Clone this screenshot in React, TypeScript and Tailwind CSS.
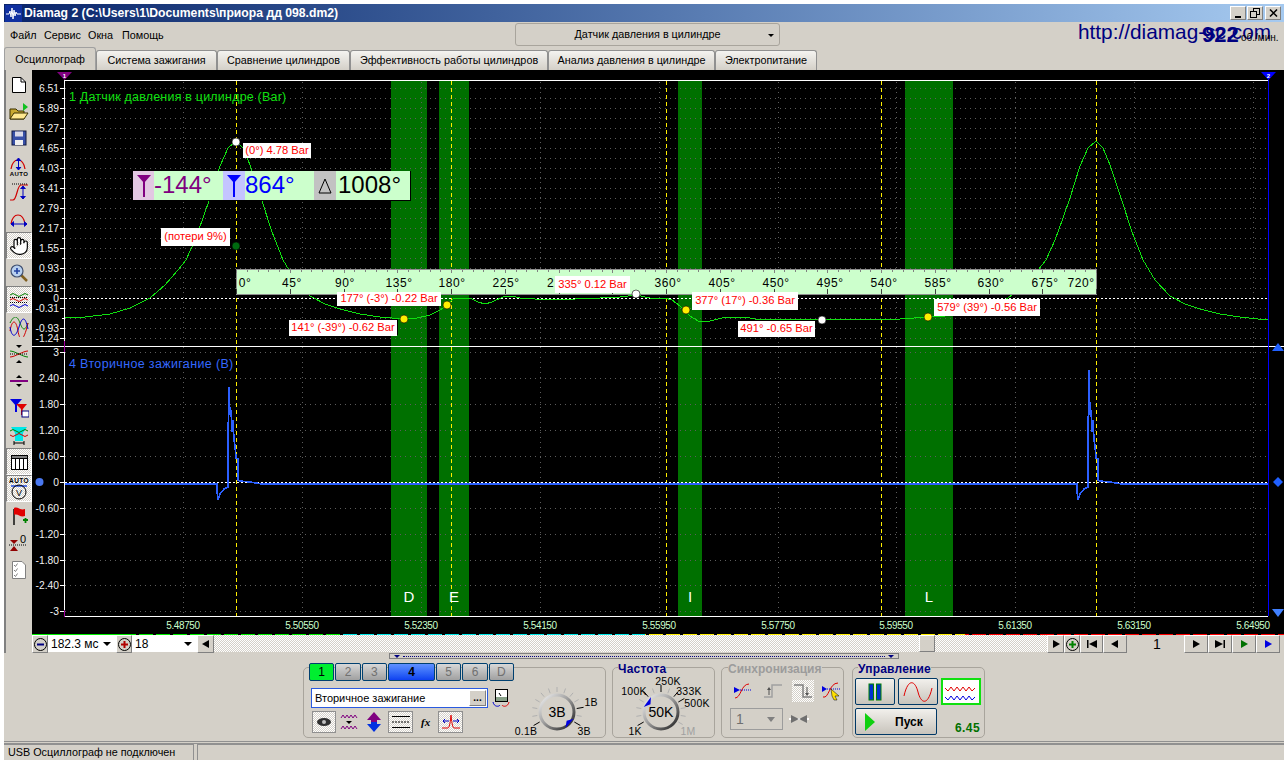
import { Hand } from "lucide-react";

const sans = "font-['Liberation_Sans',Arial,sans-serif]";
const raised = "border border-t-white border-l-white border-r-[#808080] border-b-[#808080]";
const dither = "bg-[repeating-conic-gradient(#ffffff_0%_25%,#d4d0c8_0%_50%)] bg-size-[2px_2px]";

const tabs = [
  { label: "Система зажигания", w: "w-[121px]" },
  { label: "Сравнение цилиндров", w: "w-[133px]" },
  { label: "Эффективность работы цилиндров", w: "w-[198px]" },
  { label: "Анализ давления в цилиндре", w: "w-[167px]" },
  { label: "Электропитание", w: "w-[102px]" },
];

const topTicks: [string, number][] = [
  ["6.51", 88], ["5.89", 108], ["5.27", 128], ["4.65", 148], ["4.03", 168], ["3.41", 188], ["2.79", 208], ["2.17", 228],
  ["1.55", 248], ["0.93", 268], ["0.31", 288], ["0", 298], ["-0.31", 308], ["-0.93", 328], ["-1.24", 338],
];
const botTicks: [string, number][] = [
  ["3", 352], ["2.40", 378], ["1.80", 404], ["1.20", 430], ["0.60", 456], ["0", 482], ["-0.60", 508], ["-1.20", 534],
  ["-1.80", 560], ["-2.40", 585], ["-3", 611],
];
const xLabels = ["5.48750", "5.50550", "5.52350", "5.54150", "5.55950", "5.57750", "5.59550", "5.61350", "5.63150", "5.64950"];
const xGrid = [183, 302, 421, 540, 659, 778, 896, 1015, 1134, 1253];
const bands: [number, number, string][] = [[391, 36, "D"], [439, 30, "E"], [678, 24, "I"], [905, 48, "L"]];
const cursors = [236, 451, 666, 881, 1096];

// one compression hump, shifted for the second peak
const hump = [
  [64, 318], [85, 317], [110, 314], [130, 308], [150, 298], [165, 285], [178, 270], [186, 260], [195, 240], [203, 218],
  [210, 198], [220, 166], [228, 148], [236, 141], [243, 148], [250, 165], [262, 201], [272, 232], [283, 260], [295, 280],
  [310, 296], [325, 304], [340, 309], [360, 314], [380, 317],
];
const mid = [
  [403, 319], [417, 318], [430, 315], [440, 310], [447, 305], [453, 299], [462, 298], [470, 298], [478, 302], [485, 304],
  [492, 302], [503, 297], [512, 296], [520, 298], [535, 299], [555, 300], [575, 299], [600, 298], [620, 297], [636, 295],
  [650, 298], [665, 298], [672, 300], [680, 306], [690, 316], [698, 321], [710, 321], [722, 318], [735, 317], [745, 317],
  [760, 320], [775, 319], [795, 319], [820, 320], [835, 319], [850, 320], [870, 319], [900, 319], [928, 317], [945, 316],
];
const second = hump.slice(3).map(([x, y]) => [x + 860, y]);
const tail = [[1260, 319], [1268, 320]];
const trace1 = [...hump, ...mid, [970, 310], [990, 308], [1000, 304], ...second.slice(2), [1258, 319], ...tail]
  .map((p) => p.join(","))
  .join(" ");

const spike = (dx: number, top: number) =>
  [
    [217, 484], [217, 491], [218, 500], [220, 494], [224, 489], [228, 487], [228, 438], [229, top], [230, 415], [231, 410], [232, 432],
    [233, 420], [234, 440], [235, 446], [236, 458], [238, 459], [238, 480], [240, 481], [250, 482], [262, 484],
  ]
    .map(([x, y]) => `${x + dx},${y}`)
    .join(" ");
const trace2 = `64,484 ${spike(0, 387)} ${spike(860, 370)} 1268,484`;

const tooltips = [
  { t: "(0°) 4.78 Bar", c: "left-[211px] top-[73px] w-[68px] h-[15px]" },
  { t: "(потери 9%)", c: "left-[129px] top-[158px] w-[69px] h-[18px]" },
  { t: "335° 0.12 Bar", c: "left-[523px] top-[206px] w-[75px] h-[17px]" },
  { t: "177° (-3°) -0.22 Bar", c: "left-[305px] top-[222px] w-[104px] h-[14px]" },
  { t: "377° (17°) -0.36 Bar", c: "left-[660px] top-[222px] w-[106px] h-[18px]" },
  { t: "579° (39°) -0.56 Bar", c: "left-[902px] top-[229px] w-[106px] h-[17px]" },
  { t: "141° (-39°) -0.62 Bar", c: "left-[257px] top-[250px] w-[108px] h-[16px] shadow-[1px_-1px_0_#000]" },
  { t: "491° -0.65 Bar", c: "left-[706px] top-[251px] w-[77px] h-[16px]" },
];

const dots: [number, number, string][] = [
  [236, 142, "#ffffff"], [236, 246, "#006a10"], [404, 319, "#ffee00"], [447, 305, "#ffee00"], [636, 294, "#ffffff"],
  [686, 310, "#ffee00"], [822, 320, "#ffffff"], [928, 317, "#ffee00"],
];

const rulerLabels: [string, number][] = [
  ["0°", 245], ["45°", 292], ["90°", 345], ["135°", 399], ["180°", 452], ["225°", 506], ["360°", 668], ["405°", 722],
  ["450°", 776], ["495°", 830], ["540°", 884], ["585°", 938], ["630°", 991], ["675°", 1045], ["720°", 1081],
];

function Chart() {
  return (
    <div className="relative w-[1252px] h-[564px] bg-black overflow-hidden">
      <svg className="absolute inset-0" width="1252" height="564" viewBox="32 70 1252 564">
        {bands.map(([x, w, l]) => (
          <rect key={l} x={x} y={81} width={w} height={535} fill="#007000" />
        ))}
        <g stroke="#5c5c5c" strokeDasharray="1 4" shapeRendering="crispEdges">
          {Array.from({ length: 26 }, (_, i) => 88 + i * 10).map((y) =>
            y === 298 ? null : <line key={y} x1={65} x2={1267} y1={y + 0.5} y2={y + 0.5} />,
          )}
          {botTicks.map(([l, y]) => (l === "0" ? null : <line key={l} x1={65} x2={1267} y1={y + 0.5} y2={y + 0.5} />))}
          {xGrid.map((x) => (
            <line key={x} x1={x + 0.5} x2={x + 0.5} y1={82} y2={616} />
          ))}
        </g>
        <g stroke="#ffee00" strokeDasharray="4 3" shapeRendering="crispEdges">
          {cursors.map((x) => (
            <line key={x} x1={x + 0.5} x2={x + 0.5} y1={81} y2={616} />
          ))}
        </g>
        <g stroke="#ffffff" strokeDasharray="2 2" shapeRendering="crispEdges">
          <line x1={65} x2={1267} y1={298.5} y2={298.5} />
          <line x1={65} x2={1267} y1={482.5} y2={482.5} />
        </g>
        <polyline points={trace1} fill="none" stroke="#10e010" strokeWidth="1" shapeRendering="crispEdges" />
        <polyline points={trace2} fill="none" stroke="#2c60ff" strokeWidth="1.6" shapeRendering="crispEdges" />
        <g stroke="#ffffff" shapeRendering="crispEdges">
          <line x1={64} x2={1268} y1={80.5} y2={80.5} />
          <line x1={32} x2={1284} y1={346.5} y2={346.5} />
          <line x1={64} x2={1268} y1={616.5} y2={616.5} />
          <line x1={64.5} x2={64.5} y1={80} y2={616} />
          {topTicks.map(([l, y]) => (
            <line key={l} x1={60} x2={64} y1={y + 0.5} y2={y + 0.5} />
          ))}
          {Array.from({ length: 13 }, (_, i) => 98 + i * 20).map((y) => (
            <line key={y} x1={62} x2={64} y1={y + 0.5} y2={y + 0.5} />
          ))}
          {botTicks.map(([l, y]) => (
            <line key={l} x1={60} x2={64} y1={y + 0.5} y2={y + 0.5} />
          ))}
        </g>
        <line x1={64.5} x2={64.5} y1={341} y2={352} stroke="#a000a0" shapeRendering="crispEdges" />
        <line x1={64.5} x2={64.5} y1={610} y2={617} stroke="#a000a0" shapeRendering="crispEdges" />
        <line x1={1268.5} x2={1268.5} y1={76} y2={616} stroke="#0000ff" strokeWidth="1" shapeRendering="crispEdges" />
        <polygon points="57,72 72,72 64.5,80" fill="#800080" />
        <polygon points="1261,72 1276,72 1268.5,80" fill="#0000ff" />
        <text x={64.5} y={78} fontSize="6" fontWeight="bold" fill="#fff" textAnchor="middle" fontFamily="Liberation Sans">1</text>
        <text x={1268.5} y={78} fontSize="6" fontWeight="bold" fill="#fff" textAnchor="middle" fontFamily="Liberation Sans">2</text>
        <polygon points="1278,343 1284,351 1272,351" fill="#2060ff" />
        <polygon points="1278,477 1283,482 1278,487 1273,482" fill="#2060ff" />
        <polygon points="1272,609 1284,609 1278,617" fill="#4080ff" />
        <circle cx={39.5} cy={482} r={4} fill="#4a78f0" />
        <g fontFamily="Liberation Sans" fontSize="10.3" fill="#f0f0f0" textAnchor="end">
          {topTicks.map(([l, y]) => (
            <text key={l} x={59} y={y + 4}>{l}</text>
          ))}
          {botTicks.map(([l, y]) => (
            <text key={l} x={59} y={y + 4}>{l}</text>
          ))}
        </g>
        <g fontFamily="Liberation Sans" fontSize="10" fill="#ccffcc" textAnchor="middle" letterSpacing="-0.4">
          {xLabels.map((l, i) => (
            <text key={l} x={xGrid[i]} y={629}>{l}</text>
          ))}
        </g>
        <g fontFamily="Liberation Sans" fontSize="15" fill="#ffffff" textAnchor="middle">
          {bands.map(([x, w, l]) => (
            <text key={l} x={x + w / 2} y={602}>{l}</text>
          ))}
        </g>
        <text x={69} y={101} fontFamily="Liberation Sans" fontSize="12.5" fill="#10e010" letterSpacing="0.2">1 Датчик давления в цилиндре (Bar)</text>
        <text x={69} y={368} fontFamily="Liberation Sans" fontSize="12.5" fill="#3468ff" letterSpacing="0.35">4 Вторичное зажигание (В)</text>
        {/* ruler */}
        <rect x={236} y={269} width={860} height={25} fill="#ccffcc" stroke="#909090" shapeRendering="crispEdges" />
        <g stroke="#808080" shapeRendering="crispEdges">
          {Array.from({ length: 81 }, (_, i) => i).map((i) => {
            const x = Math.round(236 + i * 10.75) + 0.5;
            return <line key={i} x1={x} x2={x} y1={270} y2={i % 5 === 0 ? 273 : 272} />;
          })}
        </g>
        <g stroke="#404040" shapeRendering="crispEdges">
          {Array.from({ length: 17 }, (_, i) => i).map((i) => {
            const x = Math.round(236 + i * 53.75) + 0.5;
            return <line key={i} x1={x} x2={x} y1={289} y2={294} />;
          })}
        </g>
        <g fontFamily="Liberation Sans" fontSize="12" fill="#000" textAnchor="middle" letterSpacing="0.6">
          {rulerLabels.map(([l, x]) => (
            <text key={l} x={x} y={287}>{l}</text>
          ))}
        </g>
        <text x={547} y={287} fontFamily="Liberation Sans" fontSize="12" fill="#000">2</text>
      </svg>
      {tooltips.map((t) => (
        <div key={t.t} className={`absolute bg-white text-[#ff0000] text-[11.2px] leading-none flex items-center justify-center whitespace-nowrap ${t.c}`}>
          {t.t}
        </div>
      ))}
      <svg className="absolute inset-0 pointer-events-none" width="1252" height="564" viewBox="32 70 1252 564">
        {dots.map(([x, y, c], i) => (
          <circle key={i} cx={x} cy={y} r={4} fill={c} stroke="#000" strokeWidth="0.6" />
        ))}
      </svg>
      {/* measurement box */}
      <div className="absolute left-[101px] top-[101px] flex h-[30px] w-[278px] bg-[#ccffcc] text-[24px] leading-[28px] border-r border-b border-black">
        <div className="w-[21px] bg-[#e2c8e2] flex items-center justify-center">
          <CursorMark color="#800080" />
        </div>
        <div className="w-[69px] text-[#800080]">-144°</div>
        <div className="w-[22px] bg-[#c4c4ff] flex items-center justify-center">
          <CursorMark color="#0000ff" />
        </div>
        <div className="w-[69px] text-[#0000ff]">864°</div>
        <div className="w-[22px] bg-[#c2c2c2] flex items-center justify-center">
          <svg width="16" height="18" viewBox="0 0 16 18"><path d="M8 2 L14 16 H2 Z" fill="none" stroke="#000" /></svg>
        </div>
        <div className="pl-[2px] text-black">1008°</div>
      </div>
    </div>
  );
}

function CursorMark({ color }: { color: string }) {
  return (
    <svg width="16" height="24" viewBox="0 0 16 24">
      <polygon points="1,1 15,1 8,9" fill={color} />
      <rect x="7" y="6" width="2" height="17" fill={color} />
    </svg>
  );
}

function ToolIcon({ i }: { i: number }) {
  const arc = <path d="M2 15 C4 3 14 3 16 15" fill="none" stroke="#d00000" strokeWidth="1.2" />;
  switch (i) {
    case 0:
      return <svg width="20" height="20" viewBox="0 0 20 20"><path d="M3.5 3.5 H12 L16.5 8 V18.5 H3.5 Z" fill="#fff" stroke="#000" /><path d="M12 3.5 V8 H16.5" fill="none" stroke="#000" /></svg>;
    case 1:
      return <svg width="20" height="20" viewBox="0 0 20 20"><path d="M1 18 V8 H7 L9 10 H15 V18 Z" fill="#c8a830" stroke="#3a3000" /><path d="M1 18 L5 12 H19 L15 18 Z" fill="#ffe890" stroke="#3a3000" /><polygon points="14,2 19,6 14,10" fill="#10c020" /></svg>;
    case 2:
      return <svg width="20" height="20" viewBox="0 0 20 20"><rect x="3" y="3" width="14" height="14" fill="#3850a8" stroke="#101840" /><rect x="6" y="3.5" width="8" height="5" fill="#d8d8e8" /><rect x="6" y="12" width="8" height="5" fill="#f0f0f0" /></svg>;
    case 3:
      return <svg width="20" height="22" viewBox="0 0 20 22">{arc}<path d="M9.5 5 V15 M7 7 L9.5 4 L12 7 M7 13 L9.5 16 L12 13" fill="#0000c0" stroke="#0000c0" /><text x="10" y="21.5" fontSize="6" fontWeight="bold" textAnchor="middle" fontFamily="Liberation Sans" letterSpacing="0.4">AUTO</text></svg>;
    case 4:
      return <svg width="20" height="20" viewBox="0 0 20 20"><path d="M1 18 H4 C8 18 8 3 12 3 H19" fill="none" stroke="#d00000" strokeWidth="1.2" /><path d="M3 2 H19" stroke="#000" strokeDasharray="1 1" /><path d="M14 5 V16 M11.5 7 L14 4 L16.5 7 M11.5 14 L14 17 L16.5 14" fill="#0000c0" stroke="#0000c0" /></svg>;
    case 5:
      return <svg width="20" height="20" viewBox="0 0 20 20">{arc}<path d="M2 15 H18 M5 12.5 L2 15 L5 17.5 M15 12.5 L18 15 L15 17.5" fill="#0000c0" stroke="#0000c0" /></svg>;
    case 6:
      return <Hand size={20} fill="#ffffff" stroke="#000000" strokeWidth={1.4} />;
    case 7:
      return <svg width="20" height="20" viewBox="0 0 20 20"><line x1="12" y1="12" x2="18" y2="18" stroke="#806020" strokeWidth="2.5" /><circle cx="8" cy="8" r="6" fill="#b8d0ef" stroke="#405070" strokeWidth="1.2" /><path d="M5 8 H11 M8 5 V11" stroke="#2040a0" strokeWidth="1.6" /></svg>;
    case 8:
      return <svg width="20" height="20" viewBox="0 0 20 20" fill="none"><path d="M1 5 q3 -3 6 0 t6 0 t6 0" stroke="#008000" /><path d="M1 7.5 H19" stroke="#000" strokeDasharray="1 1" /><path d="M1 10 q3 -3 6 0 t6 0 t6 0" stroke="#d00000" /><path d="M1 12.5 H19" stroke="#000" strokeDasharray="1 1" /><path d="M1 16 q3 -3 6 0 t6 0 t6 0" stroke="#0000d0" /></svg>;
    case 9:
      return <svg width="20" height="20" viewBox="0 0 20 20" fill="none"><path d="M1 6 C5 -2 8 -2 11 6 S16 14 19 6" stroke="#008000" /><path d="M1 14 C3 2 7 2 9 14 S15 24 19 6" stroke="#d00000" /><path d="M1 10 C3 22 7 20 10 10 S16 -2 19 12" stroke="#0000d0" /></svg>;
    case 10:
      return <svg width="20" height="20" viewBox="0 0 20 20" fill="none"><polygon points="7,1 13,1 10,4" fill="#000" /><polygon points="7,19 13,19 10,16" fill="#000" /><path d="M1 7 C6 7 14 13 19 13" stroke="#008000" /><path d="M1 13 C6 13 14 7 19 7" stroke="#d00000" /><path d="M1 10 H19" stroke="#000" strokeDasharray="1 1" /></svg>;
    case 11:
      return <svg width="20" height="20" viewBox="0 0 20 20"><polygon points="7,7 13,7 10,4" fill="#000" /><polygon points="7,13 13,13 10,16" fill="#000" /><rect x="1" y="9" width="18" height="2" fill="#800080" /></svg>;
    case 12:
      return <svg width="20" height="20" viewBox="0 0 20 20"><polygon points="1,1 13,1 7,8" fill="#0000e0" /><rect x="6" y="6" width="2" height="8" fill="#0000e0" /><polygon points="7,6 18,6 13,12" fill="#e00000" /><rect x="12" y="10" width="1.5" height="7" fill="#e00000" /><rect x="13" y="13" width="7" height="6" fill="#fff" stroke="#000080" /></svg>;
    case 13:
      return <svg width="20" height="20" viewBox="0 0 20 20" fill="none"><polygon points="2,2 18,2 14,8 14,16 6,16 6,8" fill="#00e8e8" /><path d="M1 6 q3 -3 6 0 t6 0 t6 0" stroke="#008000" /><path d="M1 10 q3 3 6 0 t6 0 t6 0" stroke="#d00000" /><path d="M5 18 H15 M5 16 V20 M15 16 V20" stroke="#000" /></svg>;
    case 14:
      return <svg width="20" height="20" viewBox="0 0 20 20"><rect x="2.5" y="3.5" width="16" height="14" fill="#fff" stroke="#000" /><rect x="2.5" y="3.5" width="16" height="3" fill="#808080" stroke="#000" /><path d="M6.5 6 V18 M10.5 6 V18 M14.5 6 V18" stroke="#000" /></svg>;
    case 15:
      return <svg width="20" height="24" viewBox="0 0 20 24"><text x="10" y="6" fontSize="6.5" fontWeight="bold" textAnchor="middle" fontFamily="Liberation Sans" letterSpacing="0.4">AUTO</text><path d="M2 9 H18" stroke="#1040e0" strokeWidth="1.4" /><circle cx="10" cy="15" r="7" fill="none" stroke="#000" /><text x="10" y="18.5" fontSize="9" textAnchor="middle" fontFamily="Liberation Sans">V</text></svg>;
    case 16:
      return <svg width="20" height="22" viewBox="0 0 20 22"><path d="M5 4 V20" stroke="#000" strokeWidth="1.4" /><path d="M5 3 C9 1 11 6 16 4 V11 C11 13 9 8 5 10 Z" fill="#e00000" /><path d="M14 15 H19 M16.5 13 V18" stroke="#008000" strokeWidth="1.8" /></svg>;
    case 17:
      return <svg width="22" height="22" viewBox="0 -3 22 22"><polygon points="2,5 10,5 6,9" fill="#900000" /><polygon points="2,16 10,16 6,11" fill="#900000" /><path d="M1 10 H19" stroke="#000" strokeDasharray="1 1" /><text x="15" y="8" fontSize="11" textAnchor="middle" fontFamily="Liberation Sans">0</text></svg>;
    default:
      return <svg width="20" height="20" viewBox="0 0 20 20"><path d="M3.5 1.5 H13 L16.5 5 V18.5 H3.5 Z" fill="#fff" stroke="#808080" /><path d="M5 5 l1.5 1.5 2 -3 M5 10 l1.5 1.5 2 -3 M5 15 l1.5 1.5 2 -3" fill="none" stroke="#808080" /></svg>;
  }
}

function Toolbar() {
  const active = [6, 8, 14, 15];
  return (
    <div className="w-[28px] flex flex-col items-center border-l-2 border-[#808080] pt-0">
      {Array.from({ length: 19 }, (_, i) => i).map((i) => (
        <div
          key={i}
          className={`w-[26px] h-[27px] flex items-center justify-center shrink-0 ${active.includes(i) ? `${dither} border border-t-[#808080] border-l-[#808080] border-r-white border-b-white` : ""}`}
        >
          <ToolIcon i={i} />
        </div>
      ))}
    </div>
  );
}

type KnobName = [string, number, number, string?];

function Knob({ label, names, marker, bold }: { label: string; names: KnobName[]; marker: number; bold: number[] }) {
  const a = (marker * Math.PI) / 180;
  return (
    <svg width="100" height="70" viewBox="0 0 100 70">
      <defs>
        <linearGradient id={`k${label}`} x1="0" y1="0" x2="1" y2="1">
          <stop offset="0" stopColor="#f4f4f4" />
          <stop offset="0.45" stopColor="#a0a0a0" />
          <stop offset="1" stopColor="#1c1c1c" />
        </linearGradient>
      </defs>
      {Array.from({ length: 13 }, (_, i) => i).map((i) => {
        const t = ((-120 + i * 20 - 90) * Math.PI) / 180;
        const long = bold.includes(i);
        return (
          <line
            key={i}
            x1={50 + Math.cos(t) * 20}
            y1={38 + Math.sin(t) * 20}
            x2={50 + Math.cos(t) * (long ? 27 : 25)}
            y2={38 + Math.sin(t) * (long ? 27 : 25)}
            stroke={long ? "#000" : "#b0b0b0"}
          />
        );
      })}
      <circle cx="50" cy="38" r="17" fill="#d4d0c8" stroke={`url(#k${label})`} strokeWidth="3" />
      <polygon
        points={`${50 + Math.cos(a) * 13},${38 + Math.sin(a) * 13} ${50 + Math.cos(a + 0.35) * 18},${38 + Math.sin(a + 0.35) * 18} ${50 + Math.cos(a - 0.35) * 18},${38 + Math.sin(a - 0.35) * 18}`}
        fill="#0000e0"
      />
      <text x="50" y="43" textAnchor="middle" fontSize="14" fontFamily="Liberation Sans">{label}</text>
      {names.map(([n, x, y, c]) => (
        <text key={n} x={x} y={y} textAnchor="middle" fontSize="10.5" fontFamily="Liberation Sans" letterSpacing="0.2" fill={c ?? "#000"}>{n}</text>
      ))}
    </svg>
  );
}

function ChannelPanel() {
  const chs = ["1", "2", "3", "4", "5", "6", "D"];
  return (
    <div className="relative w-[303px] h-[71px] mt-[4px] border border-[#a8a49c] rounded-[5px] pl-[5px]">
      <div className="w-[205px] flex flex-col">
        <div className="flex gap-[1px] -mt-[5px] h-[18px]">
          {chs.map((c) => (
            <div
              key={c}
              className={`h-[18px] ${c === "4" ? "w-[48px] bg-linear-to-b from-[#6090ff] to-[#1040f0] font-bold text-black" : c === "1" ? "w-[26px] bg-[#00ee30] text-black" : "w-[26px] bg-linear-to-b from-[#d8d8d8] to-[#a0a0a0] text-[#707070]"} border border-[#004070] rounded-[2px] flex items-center justify-center text-[12px]`}
            >
              {c}
            </div>
          ))}
        </div>
        <div className="flex mt-[7px] ml-[2px] items-center">
          <div className="w-[177px] shrink-0 h-[20px] bg-white border border-[#2a5ae0] flex items-center pl-[3px] text-[11px]">
            <span className="flex-1">Вторичное зажигание</span>
            <div className={`w-[17px] h-[16px] mr-[1px] bg-[#d4d0c8] ${raised} flex items-center justify-center text-[10px] font-bold leading-none`}>...</div>
          </div>
          <svg className="ml-[3px] shrink-0" width="20" height="20" viewBox="0 0 20 20">
            <rect x="4.5" y="1.5" width="12" height="12" fill="#fff" stroke="#000" />
            <rect x="5" y="9" width="11" height="4" fill="#88a088" />
            <path d="M8 5 l2 3" stroke="#000" />
            <path d="M2 14 C3 19 8 19 9 17" fill="none" stroke="#0000d0" />
            <path d="M18 14 C17 19 12 19 11 17" fill="none" stroke="#e00000" />
          </svg>
        </div>
        <div className="flex items-center mt-[3px] ml-[3px] h-[22px]">
          <div className={`w-[24px] h-[22px] ${dither} border border-[#909090] flex items-center justify-center`}>
            <svg width="16" height="12" viewBox="0 0 16 12"><ellipse cx="8" cy="6" rx="7" ry="4" fill="#303030" /><circle cx="8" cy="6" r="2" fill="#c0c0c0" /></svg>
          </div>
          <svg className="ml-[4px]" width="18" height="22" viewBox="0 0 18 22" fill="none">
            <path d="M1 7 l2 -3 2 3 2 -3 2 3 2 -3 2 3 2 -3 2 3" stroke="#800080" />
            <polygon points="6,10 12,10 9,13" fill="#000" />
            <path d="M1 18 l2 -3 2 3 2 -3 2 3 2 -3 2 3 2 -3 2 3" stroke="#800080" />
          </svg>
          <svg className="ml-[7px]" width="18" height="22" viewBox="0 0 18 22">
            <polygon points="9,1 16,9 12,9 12,11 6,11 6,9 2,9" fill="#800080" />
            <polygon points="9,21 16,13 12,13 12,11 6,11 6,13 2,13" fill="#0030e0" />
          </svg>
          <div className={`ml-[5px] w-[25px] h-[22px] ${dither} border border-[#909090] flex items-center justify-center`}>
            <svg width="20" height="14" viewBox="0 0 20 14"><path d="M1 1.5 H19 M1 12.5 H19" stroke="#000" /><path d="M1 7 H19" stroke="#000" strokeDasharray="2 1" /></svg>
          </div>
          <span className="ml-[8px] w-[12px] text-[11px] font-bold italic font-['Liberation_Serif',serif]">fx</span>
          <div className={`ml-[5px] w-[25px] h-[22px] ${dither} border border-[#909090] flex items-center justify-center`}>
            <svg width="20" height="16" viewBox="0 0 20 16" fill="none"><path d="M1 14 H7 C9 14 10 1 10 1 C10 1 11 14 13 14 H19" stroke="#e00000" /><path d="M2 7 H8 M12 7 H18 M4 5 L2 7 L4 9 M16 5 L18 7 L16 9" stroke="#0000c0" /></svg>
          </div>
        </div>
      </div>
      <div className="absolute left-[203px] top-[6px]">
        <Knob label="3В" marker={42} bold={[0, 10, 12]} names={[["1В", 84, 32], ["3В", 77, 61], ["0.1В", 19, 61]]} />
      </div>
    </div>
  );
}

function FreqPanel() {
  return (
    <div className="relative w-[103px] h-[71px] mt-[4px] border border-[#a8a49c] rounded-[5px]">
      <span className="absolute left-[5px] -top-[5px] bg-[#d4d0c8] text-[#000080] font-bold text-[12px] leading-none tracking-[0.2px]">Частота</span>
      <div className="absolute -left-[2px] top-[6px]">
        <Knob
          label="50K"
          marker={216}
          bold={[0, 4, 6, 8, 9]}
          names={[["250K", 57, 11], ["100K", 23, 21], ["333K", 78, 21], ["500K", 86, 33], ["1K", 24, 61], ["1M", 77, 61, "#a0a0a0"]]}
        />
      </div>
    </div>
  );
}

function SyncPanel() {
  return (
    <div className="relative w-[123px] h-[71px] mt-[4px] border border-[#a8a49c] rounded-[5px]">
      <span className="absolute left-[6px] -top-[5px] bg-[#d4d0c8] text-[#9c9c9c] font-bold text-[12px] leading-none">Синхронизация</span>
      <div className="flex items-center ml-[10px] mt-[12px] gap-[1px]">
        <div className="w-[24px] h-[22px] flex items-center justify-center">
          <svg width="20" height="18" viewBox="0 0 20 18" fill="none"><path d="M2 16 C8 16 8 2 16 2" stroke="#e00000" /><polygon points="1,5 7,8 1,11" fill="#0000e0" /><path d="M7 8 H18" stroke="#0000e0" strokeDasharray="1 1" /></svg>
        </div>
        <div className="w-[24px] ml-[6px] h-[22px] flex items-center justify-center">
          <svg width="20" height="18" viewBox="0 0 20 18" fill="none"><path d="M1 15 H9 V3 H19" stroke="#a0a0a0" strokeWidth="1.5" /><path d="M6 7 V13" stroke="#505050" /><polygon points="4,8 8,8 6,5" fill="#505050" /></svg>
        </div>
        <div className={`w-[24px] ml-[6px] h-[22px] ${dither} flex items-center justify-center`}>
          <svg width="20" height="18" viewBox="0 0 20 18" fill="none"><path d="M1 3 H10 V15 H19" stroke="#808080" strokeWidth="1.5" /><path d="M14 5 V12" stroke="#505050" /><polygon points="12,11 16,11 14,14" fill="#505050" /></svg>
        </div>
        <div className="w-[24px] ml-[5px] h-[22px] flex items-center justify-center">
          <svg width="22" height="20" viewBox="0 0 22 20" fill="none"><path d="M2 16 C8 18 8 2 17 2" stroke="#e00000" /><polygon points="1,5 6,8 1,11" fill="#0000e0" /><path d="M6 8 H19" stroke="#0000e0" strokeDasharray="1 1" /><polygon points="10,8 18,15 14,15 16,19 13,19 11,15" fill="#ffe000" stroke="#000" strokeWidth="0.5" /></svg>
        </div>
      </div>
      <div className="flex items-center ml-[8px] mt-[6px]">
        <div className="w-[53px] h-[22px] border border-[#9c9c9c] flex items-center justify-between pl-[5px] pr-[7px] text-[14px] text-[#707070]">
          <span>1</span>
          <span className="w-0 h-0 border-l-[4px] border-r-[4px] border-t-[5px] border-l-transparent border-r-transparent border-t-[#808080]" />
        </div>
        <svg className="ml-[5px]" width="22" height="12" viewBox="0 0 22 12"><path d="M1 6 H21" stroke="#fff" strokeWidth="2" /><polygon points="3,2 11,6 3,10" fill="#707070" /><polygon points="19,2 11,6 19,10" fill="#707070" /></svg>
      </div>
    </div>
  );
}

function ControlPanel() {
  const btn = "border border-[#003866] rounded-[2px] bg-linear-to-b from-[#f2f0ec] to-[#c8c4bc] flex items-center justify-center";
  return (
    <div className="relative w-[133px] h-[71px] mt-[4px] border border-[#a8a49c] rounded-[5px] pl-[2px] pt-[10px]">
      <span className="absolute left-[5px] -top-[5px] bg-[#d4d0c8] text-[#000080] font-bold text-[12px] leading-none tracking-[0.2px]">Управление</span>
      <div className="flex gap-[3px]">
        <div className={`w-[40px] h-[27px] ${btn}`}>
          <svg width="14" height="18" viewBox="0 0 14 18"><rect x="1" y="1" width="4.5" height="16" fill="#0030d0" stroke="#008000" /><rect x="8.5" y="1" width="4.5" height="16" fill="#0030d0" stroke="#008000" /></svg>
        </div>
        <div className={`w-[40px] h-[27px] ${btn}`}>
          <svg width="30" height="20" viewBox="0 0 30 20" fill="none"><path d="M1 14 C5 -4 12 -2 15 10 S25 24 29 6" stroke="#e00000" /></svg>
        </div>
        <div className="w-[40px] h-[27px] bg-white border-2 border-[#10e010] flex items-center justify-center">
          <svg width="34" height="20" viewBox="0 0 34 20" fill="none"><path d="M1 6 l3 3 3 -4 3 4 3 -4 3 4 3 -4 3 4 3 -4 3 4 3 -3" stroke="#e00000" /><path d="M1 15 l3 3 3 -4 3 4 3 -4 3 4 3 -4 3 4 3 -4 3 4 3 -3" stroke="#0000e0" /></svg>
        </div>
      </div>
      <div className="flex items-end mt-[3px]">
        <div className={`w-[82px] h-[27px] ${btn} pl-[8px] justify-start`}>
          <svg width="12" height="20" viewBox="0 0 12 20"><polygon points="1,1 11,10 1,19" fill="#10d010" /></svg>
          <span className="ml-[19px] font-bold text-[12px]">Пуск</span>
        </div>
        <span className="ml-[18px] mb-[1px] text-[#007000] font-bold text-[12px] leading-none tracking-[0.4px]">6.45</span>
      </div>
    </div>
  );
}

const navBtn = `h-[18px] bg-[#d4d0c8] ${raised} flex items-center justify-center`;

function Tri({ dir, color = "#000" }: { dir: "l" | "r"; color?: string }) {
  return (
    <svg width="10" height="10" viewBox="0 0 10 10">
      <polygon points={dir === "l" ? "8,1 1,5 8,9" : "2,1 9,5 2,9"} fill={color} />
    </svg>
  );
}

function RoundBtn({ color, minus }: { color: string; minus?: boolean }) {
  return (
    <div className={`w-[16px] ${navBtn}`}>
      <svg width="13" height="13" viewBox="0 0 13 13">
        <circle cx="6.5" cy="6.5" r="6" fill="#d4d0c8" stroke="#000" />
        <path d={minus ? "M3 6.5 H10" : "M3 6.5 H10 M6.5 3 V10"} stroke={color} strokeWidth="2" />
      </svg>
    </div>
  );
}

function ControlsRow() {
  return (
    <div className="h-[19px]">
      <div className="relative flex h-[1px]">
        <div className="w-[308px] bg-[#00ee00]" />
        <div className="w-[305px] bg-[#00e8e8]" />
        <div className="w-[320px] bg-[#ffee00]" />
        <div className="w-[319px] bg-[#ff0000]" />
        <div className="absolute inset-0 left-[90px] bg-[repeating-linear-gradient(90deg,transparent_0_14px,#000000_14px_17px)]" />
      </div>
      <div className="flex items-start text-[12px]">
        <RoundBtn color="#000080" minus />
        <div className="w-[68px] h-[17px] bg-white flex items-center justify-between pl-[3px] pr-[5px] whitespace-nowrap">
          <span>182.3 мс</span>
          <span className="w-0 h-0 shrink-0 border-l-[4px] border-r-[4px] border-t-[4px] border-l-transparent border-r-transparent border-t-black" />
        </div>
        <RoundBtn color="#b00000" />
        <div className="w-[65px] h-[17px] bg-white flex items-center justify-between pl-[3px] pr-[5px]">
          <span>18</span>
          <span className="w-0 h-0 border-l-[4px] border-r-[4px] border-t-[4px] border-l-transparent border-r-transparent border-t-black" />
        </div>
        <div className={`w-[17px] ${navBtn}`}><Tri dir="l" /></div>
        <div className={`w-[833px] h-[17px] ${dither} pl-[705px]`}>
          <div className={`w-[16px] h-[17px] bg-[#d4d0c8] ${raised}`} />
        </div>
        <div className={`w-[17px] ${navBtn}`}><Tri dir="r" /></div>
        <RoundBtn color="#008000" />
        <div className={`w-[23px] ${navBtn}`}>
          <svg width="12" height="10" viewBox="0 0 12 10"><rect x="1" y="1" width="1.5" height="8" /><polygon points="11,1 3,5 11,9" /></svg>
        </div>
        <div className={`w-[24px] ${navBtn}`}><Tri dir="l" /></div>
        <div className="w-[57px] h-[18px] flex items-center justify-center pl-[3px] text-[14px]">1</div>
        <div className={`w-[24px] ${navBtn}`}><Tri dir="r" /></div>
        <div className={`w-[24px] ${navBtn}`}>
          <svg width="12" height="10" viewBox="0 0 12 10"><polygon points="1,1 9,5 1,9" /><rect x="9.5" y="1" width="1.5" height="8" /></svg>
        </div>
        <div className={`w-[24px] ${navBtn}`}><Tri dir="r" color="#007000" /></div>
        <div className={`w-[24px] ${navBtn}`}><Tri dir="r" color="#0000e0" /></div>
      </div>
    </div>
  );
}

export default function App() {
  return (
    <div className={`w-[1288px] h-[764px] bg-white pt-[4px] pl-[4px] overflow-hidden ${sans}`}>
      <div className="w-[1280px] h-[758px] bg-[#d4d0c8] text-black">
        {/* title bar */}
        <div className="h-[18px] flex items-center bg-linear-to-r from-[#0a246a] to-[#a6caf0] pl-[1px] pr-[3px]">
          <svg width="17" height="17" viewBox="0 0 17 17">
            <rect width="17" height="17" fill="#1030a0" />
            <path d="M1 9 H4 L5 6 L6 12 L7 3 L8 14 L9 5 L10 11 L11 7 L12 9 H16" fill="none" stroke="#ffffff" />
          </svg>
          <span className="ml-[2px] text-white font-bold text-[12.2px] whitespace-nowrap">
            Diamag 2 (C:\Users\1\Documents\приора дд 098.dm2)
          </span>
          <div className="ml-auto flex gap-[1px]">
            <div className={`w-[16px] h-[14px] bg-[#d4d0c8] ${raised} flex items-end justify-center pb-[1px]`}>
              <div className="w-[6px] h-[2px] bg-black" />
            </div>
            <div className={`w-[16px] h-[14px] bg-[#d4d0c8] ${raised} flex items-center justify-center`}>
              <svg width="10" height="10" viewBox="0 0 10 10" fill="none"><rect x="3.5" y="0.5" width="6" height="6" stroke="#000" /><rect x="0.5" y="3.5" width="6" height="6" fill="#d4d0c8" stroke="#000" /></svg>
            </div>
            <div className={`ml-[1px] w-[16px] h-[14px] bg-[#d4d0c8] ${raised} flex items-center justify-center`}>
              <svg width="9" height="8" viewBox="0 0 9 8"><path d="M1 0.5 L8 7.5 M8 0.5 L1 7.5" stroke="#000" strokeWidth="1.5" /></svg>
            </div>
          </div>
        </div>
        {/* menu */}
        <div className="relative h-[26px] flex items-center pl-[6px] text-[10.8px]">
          <span className="w-[34px]">Файл</span>
          <span className="w-[44px]">Сервис</span>
          <span className="w-[34px]">Окна</span>
          <span>Помощь</span>
          <div className="absolute left-[511px] top-[1px] w-[265px] h-[23px] border border-[#a8a49c] rounded-[3px] flex items-center justify-center text-[10.8px]">
            Датчик давления в цилиндре
            <span className="absolute right-[5px] top-[10px] w-0 h-0 border-l-[3px] border-r-[3px] border-t-[3px] border-l-transparent border-r-transparent border-t-black" />
          </div>
          <span className="absolute left-[1074px] top-[-1px] text-[20.8px] leading-[22px] text-[#000080] whitespace-nowrap">http://diamag-sc.com</span>
          <span className="absolute left-[1198px] top-[1px] text-[22px] leading-[24px] font-bold text-[#000080]">922</span>
          <span className="absolute left-[1237px] top-[10px] text-[10px] leading-[12px] whitespace-nowrap">об./мин.</span>
        </div>
        {/* tabs */}
        <div className="h-[22px] flex items-end text-[10.8px]">
          <div className="w-[92px] h-[23px] border border-b-0 border-[#a0a0a0] rounded-t-[3px] flex items-center justify-center bg-[#d4d0c8]">
            Осциллограф
          </div>
          {tabs.map((t) => (
            <div
              key={t.label}
              className={`${t.w} h-[20px] border border-b-0 border-[#909090] rounded-t-[3px] flex items-center justify-center bg-linear-to-b from-[#f4f3f0] to-[#d4d0c8] whitespace-nowrap`}
            >
              {t.label}
            </div>
          ))}
        </div>
        {/* main */}
        <div className="flex">
          <Toolbar />
          <div className="flex flex-col">
            <Chart />
            <ControlsRow />
          </div>
        </div>
        {/* lower panels */}
        <div className="h-[88px]">
          <div className="ml-[385px] w-[510px] h-[6px] border border-[#808080] flex items-center justify-between px-[4px]">
            <span className="w-0 h-0 border-l-[3px] border-r-[3px] border-t-[3px] border-l-transparent border-r-transparent border-t-[#000080]" />
            <div className="flex-1 mx-[3px] border-t border-dotted border-[#000080]" />
            <span className="w-0 h-0 border-l-[3px] border-r-[3px] border-t-[3px] border-l-transparent border-r-transparent border-t-[#000080]" />
          </div>
          <div className="flex ml-[299px] mt-[4px] items-start">
            <ChannelPanel />
            <div className="ml-[6px]"><FreqPanel /></div>
            <div className="ml-[6px]"><SyncPanel /></div>
            <div className="ml-[8px]"><ControlPanel /></div>
          </div>
        </div>
        {/* status bar */}
        <div className="border-t border-b border-[#909090] h-[3px]" />
        <div className="h-[16px] flex text-[10.8px]">
          <div className="w-[190px] border-t border-r border-[#909090] pl-[4px] flex items-center">USB Осциллограф не подключен</div>
          <div className="flex-1 ml-[3px] border-t border-l border-[#909090]" />
        </div>
        <div className="h-[2px] bg-white" />
      </div>
    </div>
  );
}
